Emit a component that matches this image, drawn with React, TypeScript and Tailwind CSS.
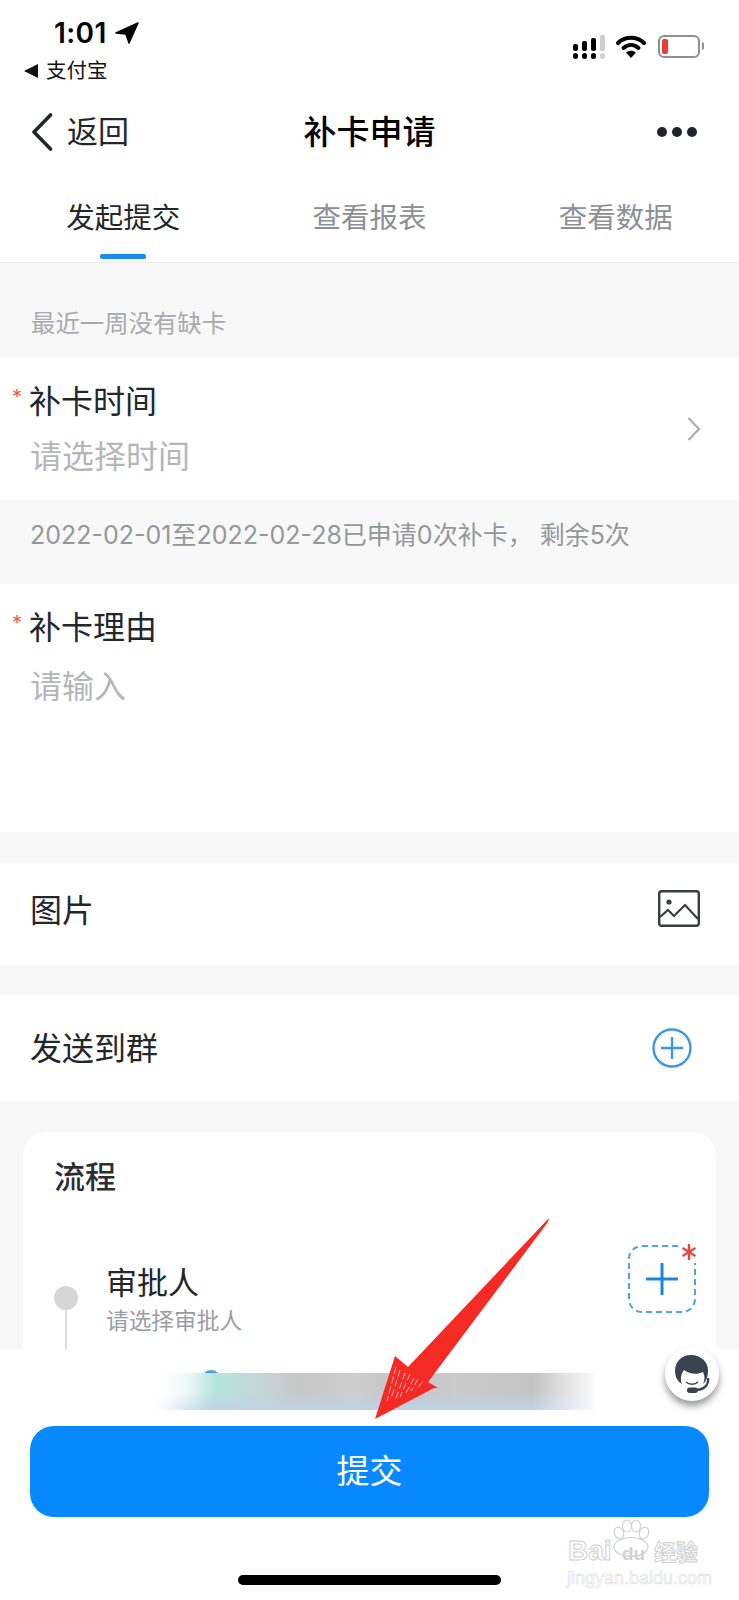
const cjk = "font-['Inter','Noto_Sans_CJK_SC','Noto_Sans',sans-serif]";

const StatusBar = () => (
  <div className="flex h-[94px] justify-between">
    <div className="pl-[24px]">
      <div className="mt-[18px] flex h-[30px] items-center pl-[30px]">
        <span className="text-[28px] leading-[30px] font-semibold tracking-[0.4px] text-black">1:01</span>
        <svg width="24" height="22" viewBox="0 0 24 22" className="ml-[8px]">
          <path d="M23 1 L1 11 L11 12 L14 21 Z" fill="#000" stroke="#000" strokeWidth="1.5" strokeLinejoin="round" />
        </svg>
      </div>
      <div className="mt-[11px] flex h-[24px] items-center">
        <svg width="14" height="14" viewBox="0 0 14 14">
          <path d="M14 0 V14 L0 7 Z" fill="#111" />
        </svg>
        <span className="ml-[8px] text-[20.5px] leading-[24px] text-[#111]">支付宝</span>
      </div>
    </div>
    <div className="mt-[35px] mr-[35px] flex h-[24px] items-start">
      <svg width="32" height="24" viewBox="0 0 32 24">
        <g fill="#000">
          <rect x="0" y="9" width="5" height="7" rx="2" />
          <rect x="9" y="6" width="5" height="10" rx="2" />
          <rect x="18" y="3" width="5" height="13" rx="2" />
          <rect x="0" y="18" width="5" height="6" rx="2.5" />
          <rect x="9" y="18" width="5" height="6" rx="2.5" />
          <rect x="18" y="18" width="5" height="6" rx="2.5" />
        </g>
        <rect x="27" y="0" width="5" height="16" rx="1.5" fill="#cfcfcf" />
        <rect x="27" y="18" width="5" height="6" rx="2.5" fill="#cfcfcf" />
      </svg>
      <svg width="30" height="23" viewBox="0 0 30 23" className="ml-[11px]">
        <path d="M2 8 C9 1 21 1 28 8" fill="none" stroke="#000" strokeWidth="4" strokeLinecap="round" />
        <path d="M7.5 13 C12 9 18 9 22.5 13" fill="none" stroke="#000" strokeWidth="4" strokeLinecap="round" />
        <path d="M15 23 L10 17.5 C13 15 17 15 20 17.5 Z" fill="#000" />
      </svg>
      <div className="ml-[12px] h-[23px] w-[42px] rounded-[6px] border-2 border-[#8f8f8f] p-[2px]">
        <div className="h-full w-[6px] rounded-[2px] bg-[#ee3a32]" />
      </div>
      <div className="mt-[7px] ml-[2px] h-[8px] w-[2px] rounded-r-full bg-[#8f8f8f]" />
    </div>
  </div>
);

const NavBar = () => (
  <div className="flex h-[72px] items-center justify-between pt-[3px] pr-[42px] pl-[31px]">
    <div className="flex w-[211px] items-center">
      <svg width="22" height="38" viewBox="0 0 22 38">
        <path d="M19.5 2 L3 19 L19.5 36" fill="none" stroke="#22262b" strokeWidth="3.6" strokeLinecap="round" strokeLinejoin="round" />
      </svg>
      <span className="ml-[14px] text-[31px] leading-[40px] text-[#23272c]">返回</span>
    </div>
    <span className="text-[33px] leading-[40px] font-medium text-black">补卡申请</span>
    <div className="flex w-[200px] justify-end gap-[5px]">
      <div className="size-[10px] rounded-full bg-[#1f2329]" />
      <div className="size-[10px] rounded-full bg-[#1f2329]" />
      <div className="size-[10px] rounded-full bg-[#1f2329]" />
    </div>
  </div>
);

const Tabs = () => (
  <div className="grid h-[97px] grid-cols-3 border-b border-[#eaecee]">
    <div className="flex flex-col items-center pt-[32px]">
      <span className="text-[28.5px] leading-[40px] text-[#23272c]">发起提交</span>
      <div className="mt-[16px] h-[5px] w-[46px] rounded-[2px] bg-[#1a8cf0]" />
    </div>
    <div className="flex flex-col items-center pt-[32px]">
      <span className="text-[28.5px] leading-[40px] text-[#8b9097]">查看报表</span>
    </div>
    <div className="flex flex-col items-center pt-[32px]">
      <span className="text-[28.5px] leading-[40px] text-[#8b9097]">查看数据</span>
    </div>
  </div>
);

const Label = ({ text }: { text: string }) => (
  <div className="relative pl-[29px] text-[32px] leading-[40px] text-[#23272c]">
    <span className="absolute top-[3px] left-[12px] text-[20px] leading-[24px] text-[#e8604c]">*</span>
    {text}
  </div>
);

const Flow = () => (
  <div className="mx-[23px] mt-[31px] h-[300px] rounded-[24px] bg-white pt-[25px] pl-[31px]">
    <div className="text-[31px] leading-[40px] font-medium text-[#2b2e33]">流程</div>
    <div className="mt-[48px] flex">
      <div className="mt-[41px] flex flex-col items-center">
        <div className="size-[24px] rounded-full bg-[#d6d6d6]" />
        <div className="h-[60px] w-[2px] bg-[#dcdcdc]" />
      </div>
      <div className="mt-[18px] ml-[28px]">
        <div className="text-[31px] leading-[40px] text-[#23272c]">审批人</div>
        <div className="mt-[3px] text-[22.7px] leading-[30px] text-[#9a9da3]">请选择审批人</div>
      </div>
      <div className="relative mr-[20px] ml-auto flex size-[68px] items-center justify-center rounded-[14px] border-2 border-dashed border-[#4ba6e0]">
        <svg width="32" height="32" viewBox="0 0 32 32">
          <path d="M16 1 V31 M1 16 H31" stroke="#1a86dc" strokeWidth="3" strokeLinecap="round" />
        </svg>
        <div className="absolute -top-[3px] -right-[3px] bg-white px-[1px] pb-[3px]">
          <svg width="14" height="16" viewBox="0 0 14 16">
            <path d="M7 0 V16 M0.5 4 L13.5 12 M13.5 4 L0.5 12" stroke="#ea4640" strokeWidth="2.4" />
          </svg>
        </div>
      </div>
    </div>
  </div>
);

const Arrow = () => (
  <svg width="190" height="210" viewBox="0 0 190 210" className="absolute top-[1215px] left-[370px]">
    <path d="M179 3 L178 7 L58 167 L68 173 L64 173 L5 204 L25 141 L38 152 Z" fill="#f42a24" />
    <path
      d="M26 152 L17 186 M30 155 L21 184 M35 158 L25 186 M40 159 L30 182 M44 163 L36 178 M48 164 L41 176 M53 166 L47 174"
      fill="none"
      stroke="#fff"
      strokeOpacity="0.6"
      strokeWidth="1"
      strokeDasharray="7 3"
    />
  </svg>
);

const Support = () => (
  <div className="absolute top-[1347px] left-[665px] flex size-[54px] items-center justify-center rounded-full bg-white shadow-[0_5px_7px_rgba(0,0,0,0.4)]">
    <svg width="38" height="40" viewBox="0 0 38 40">
      <path
        d="M18 1 C8 1 2 8 2 17 C2 23 5 28 9 30 C7 25 8 20 11 16 C16 20 24 21 30 18 C32 22 32 26 30 30 C34 27 35 21 35 16 C35 8 28 1 18 1 Z"
        fill="#3a4450"
      />
      <path d="M13 28 C16 31 22 31 25 28" fill="none" stroke="#3a4450" strokeWidth="1.4" />
      <path d="M35 24 C36 32 30 36 22 36" fill="none" stroke="#3a4450" strokeWidth="2.4" />
      <rect x="14" y="33.5" width="11" height="5.5" rx="2.7" fill="#3a4450" />
    </svg>
  </div>
);

const Watermark = () => (
  <div className="pointer-events-none absolute top-[1518px] left-[567px] w-[134px] font-['Liberation_Sans','Noto_Sans_CJK_SC',sans-serif] text-white">
    <svg width="46" height="38" viewBox="0 0 46 38" className="absolute top-[1px] left-[41px]">
      <g fill="#fff" stroke="#d0d0d0" strokeWidth="1.2">
        <ellipse cx="11" cy="14" rx="4.5" ry="6" transform="rotate(-25 11 14)" />
        <ellipse cx="19" cy="7" rx="4.5" ry="6" />
        <ellipse cx="28" cy="7" rx="4.5" ry="6" />
        <ellipse cx="36" cy="14" rx="4.5" ry="6" transform="rotate(25 36 14)" />
        <ellipse cx="23" cy="28" rx="17" ry="9.5" />
      </g>
    </svg>
    <span className="absolute top-[18px] left-[1px] text-[28px] leading-[30px] font-bold [-webkit-text-stroke:1px_#cfcfcf]">Bai</span>
    <span className="absolute top-[26px] left-[55px] text-[19px] leading-[20px] font-bold text-[#d2d2d2]">du</span>
    <span className="absolute top-[23px] left-[87px] text-[22px] leading-[24px] font-bold [-webkit-text-stroke:1px_#cfcfcf]">经验</span>
    <span className="absolute top-[50px] left-[0px] text-[18px] leading-[20px] whitespace-nowrap [-webkit-text-stroke:0.6px_#dcdcdc]">jingyan.baidu.com</span>
  </div>
);

export default function App() {
  return (
    <div className={`relative h-[1600px] w-[739px] overflow-hidden bg-white ${cjk}`}>
      <StatusBar />
      <NavBar />
      <Tabs />

      {/* Form */}
      <div className="h-[1087px] overflow-hidden bg-[#f8f8f8]">
        <div className="h-[95px] pt-[46px] pl-[31px] text-[24.4px] leading-[28px] text-[#a8aaae]">最近一周没有缺卡</div>

        <div className="relative h-[142px] bg-white pt-[24px]">
          <Label text="补卡时间" />
          <div className="mt-[15px] pl-[30px] text-[32px] leading-[40px] text-[#b4b6ba]">请选择时间</div>
          <svg width="16" height="26" viewBox="0 0 16 26" className="absolute top-[58px] right-[37px]">
            <path d="M2.5 2 L13 13 L2.5 24" fill="none" stroke="#a9acb0" strokeWidth="2.2" />
          </svg>
        </div>

        <div className="h-[84px] pt-[21px] pl-[30px] text-[25px] leading-[28px] text-[#94979c]">
          2022-02-01至2022-02-28已申请0次补卡，<span className="ml-[7px]">剩余5次</span>
        </div>

        <div className="h-[248px] bg-white pt-[24px]">
          <Label text="补卡理由" />
          <div className="mt-[19px] pl-[30px] text-[32px] leading-[40px] text-[#b4b6ba]">请输入</div>
        </div>

        <div className="mt-[31px] flex h-[102px] items-center justify-between bg-white pr-[39px] pl-[30px]">
          <span className="mt-[-6px] text-[32px] leading-[40px] text-[#23272c]">图片</span>
          <svg width="42" height="37" viewBox="0 0 42 37" className="mt-[-12px]">
            <rect x="1.2" y="1.2" width="39.6" height="34.6" rx="2.5" fill="none" stroke="#3a3d42" strokeWidth="2.4" />
            <circle cx="11" cy="12" r="2.6" fill="#3a3d42" />
            <path d="M2 27 L10 20 L16 26 L27 15 L40 29" fill="none" stroke="#3a3d42" strokeWidth="2.2" />
          </svg>
        </div>

        <div className="mt-[30px] flex h-[106px] items-center justify-between bg-white pr-[47px] pl-[30px]">
          <span className="mt-[2px] text-[32px] leading-[40px] text-[#23272c]">发送到群</span>
          <svg width="40" height="40" viewBox="0 0 40 40">
            <circle cx="20" cy="20" r="18.5" fill="none" stroke="#3d97e6" strokeWidth="2.4" />
            <path d="M20 9 V31 M9 20 H31" stroke="#3d97e6" strokeWidth="2.4" />
          </svg>
        </div>

        <Flow />
      </div>

      {/* Bottom bar */}
      <div className="flex h-[250px] flex-col items-center bg-white">
        <div className="relative mt-[23px] ml-[12px] h-[37px] w-[436px]">
          <div className="absolute -top-[3px] left-[43px] h-[10px] w-[20px] rounded-t-full bg-[#4a9bdc]" />
          <div className="absolute inset-0 bg-[linear-gradient(90deg,rgba(255,255,255,0.95)_0%,rgba(255,255,255,0)_12%,rgba(255,255,255,0)_86%,rgba(255,255,255,0.9)_100%),linear-gradient(180deg,rgba(194,212,230,0)_50%,#c0d3e7_100%),linear-gradient(90deg,#fff_0%,#b4e4dc_14%,#c4d8d6_22%,#c8c8c8_32%,#cdcdcd_46%,#c4c4c4_56%,#cbcbcb_68%,#c4c4c4_86%,#c8c8c8_100%)]" />
        </div>
        <div className="mt-[16px] flex h-[91px] w-[679px] items-center justify-center rounded-[24px] bg-[#0888fd] text-[33px] text-white">提交</div>
        <div className="mt-[58px] h-[10px] w-[263px] rounded-full bg-black" />
      </div>

      <Support />
      <Arrow />
      <Watermark />
    </div>
  );
}
